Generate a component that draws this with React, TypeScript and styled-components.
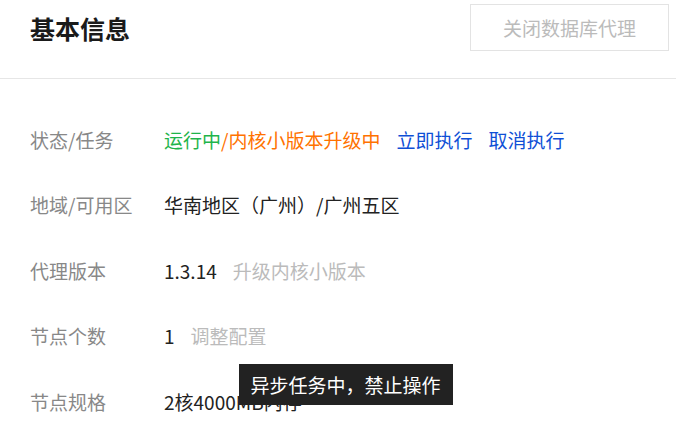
import styled, { createGlobalStyle } from 'styled-components'

const GlobalStyle = createGlobalStyle`
  html, body {
    margin: 0;
    padding: 0;
    background: #fff;
  }
  body {
    font-family: "Noto Sans CJK SC", "Noto Sans", sans-serif;
    font-size: 19px;
    color: #222;
  }
`

const Page = styled.div`
  width: 676px;
  height: 430px;
  overflow: hidden;
  background: #fff;
`

const Header = styled.div`
  height: 79px;
  box-sizing: border-box;
  display: flex;
  justify-content: space-between;
  align-items: flex-start;
  padding: 4px 7px 0 30px;
  border-bottom: 1px solid #e6e6e6;
`

const Title = styled.h1`
  margin: 0;
  font-size: 25px;
  font-weight: 700;
  line-height: 49px;
  color: #1a1a1a;
`

const GhostButton = styled.button`
  width: 199px;
  height: 47px;
  border: 1px solid #e3e3e3;
  background: #fff;
  color: #bbb;
  font-family: inherit;
  font-size: 19px;
  cursor: not-allowed;
  padding: 0;
`

const Body = styled.div`
  padding: 28px 0 0 30px;
`

const Row = styled.div`
  display: grid;
  grid-template-columns: 134px 1fr;
  align-items: center;
  height: 65.5px;
  line-height: 26px;
`

const Label = styled.div`
  color: #888;
`

const Value = styled.div`
  display: flex;
  align-items: center;
  color: #222;
`

const Status = styled.span<{ $tone: 'success' | 'warning' }>`
  color: ${(p) => (p.$tone === 'success' ? '#1fb44b' : '#ff7200')};
`

const Link = styled.a<{ $disabled?: boolean }>`
  margin-left: 16px;
  color: ${(p) => (p.$disabled ? '#bbb' : '#0f4fd6')};
  text-decoration: none;
  cursor: ${(p) => (p.$disabled ? 'not-allowed' : 'pointer')};
`

const Anchor = styled.span`
  position: relative;
  display: inline-flex;
`

const Tooltip = styled.div`
  position: absolute;
  top: calc(100% + 15px);
  left: 64px;
  z-index: 2;
  height: 41px;
  padding: 0 12px;
  display: flex;
  align-items: center;
  white-space: nowrap;
  background: #222;
  color: #fff;
  font-size: 19px;
`

export default function App() {
  return (
    <Page>
      <GlobalStyle />
      <Header>
        <Title>基本信息</Title>
        <GhostButton disabled>关闭数据库代理</GhostButton>
      </Header>
      <Body>
        <Row>
          <Label>状态/任务</Label>
          <Value>
            <Status $tone="success">运行中</Status>
            <Status $tone="warning">/内核小版本升级中</Status>
            <Link>立即执行</Link>
            <Link>取消执行</Link>
          </Value>
        </Row>
        <Row>
          <Label>地域/可用区</Label>
          <Value>华南地区（广州）/广州五区</Value>
        </Row>
        <Row>
          <Label>代理版本</Label>
          <Value>
            1.3.14
            <Link $disabled>升级内核小版本</Link>
          </Value>
        </Row>
        <Row>
          <Label>节点个数</Label>
          <Value>
            1
            <Anchor>
              <Link $disabled>调整配置</Link>
              <Tooltip>异步任务中，禁止操作</Tooltip>
            </Anchor>
          </Value>
        </Row>
        <Row>
          <Label>节点规格</Label>
          <Value>2核4000MB内存</Value>
        </Row>
      </Body>
    </Page>
  )
}
